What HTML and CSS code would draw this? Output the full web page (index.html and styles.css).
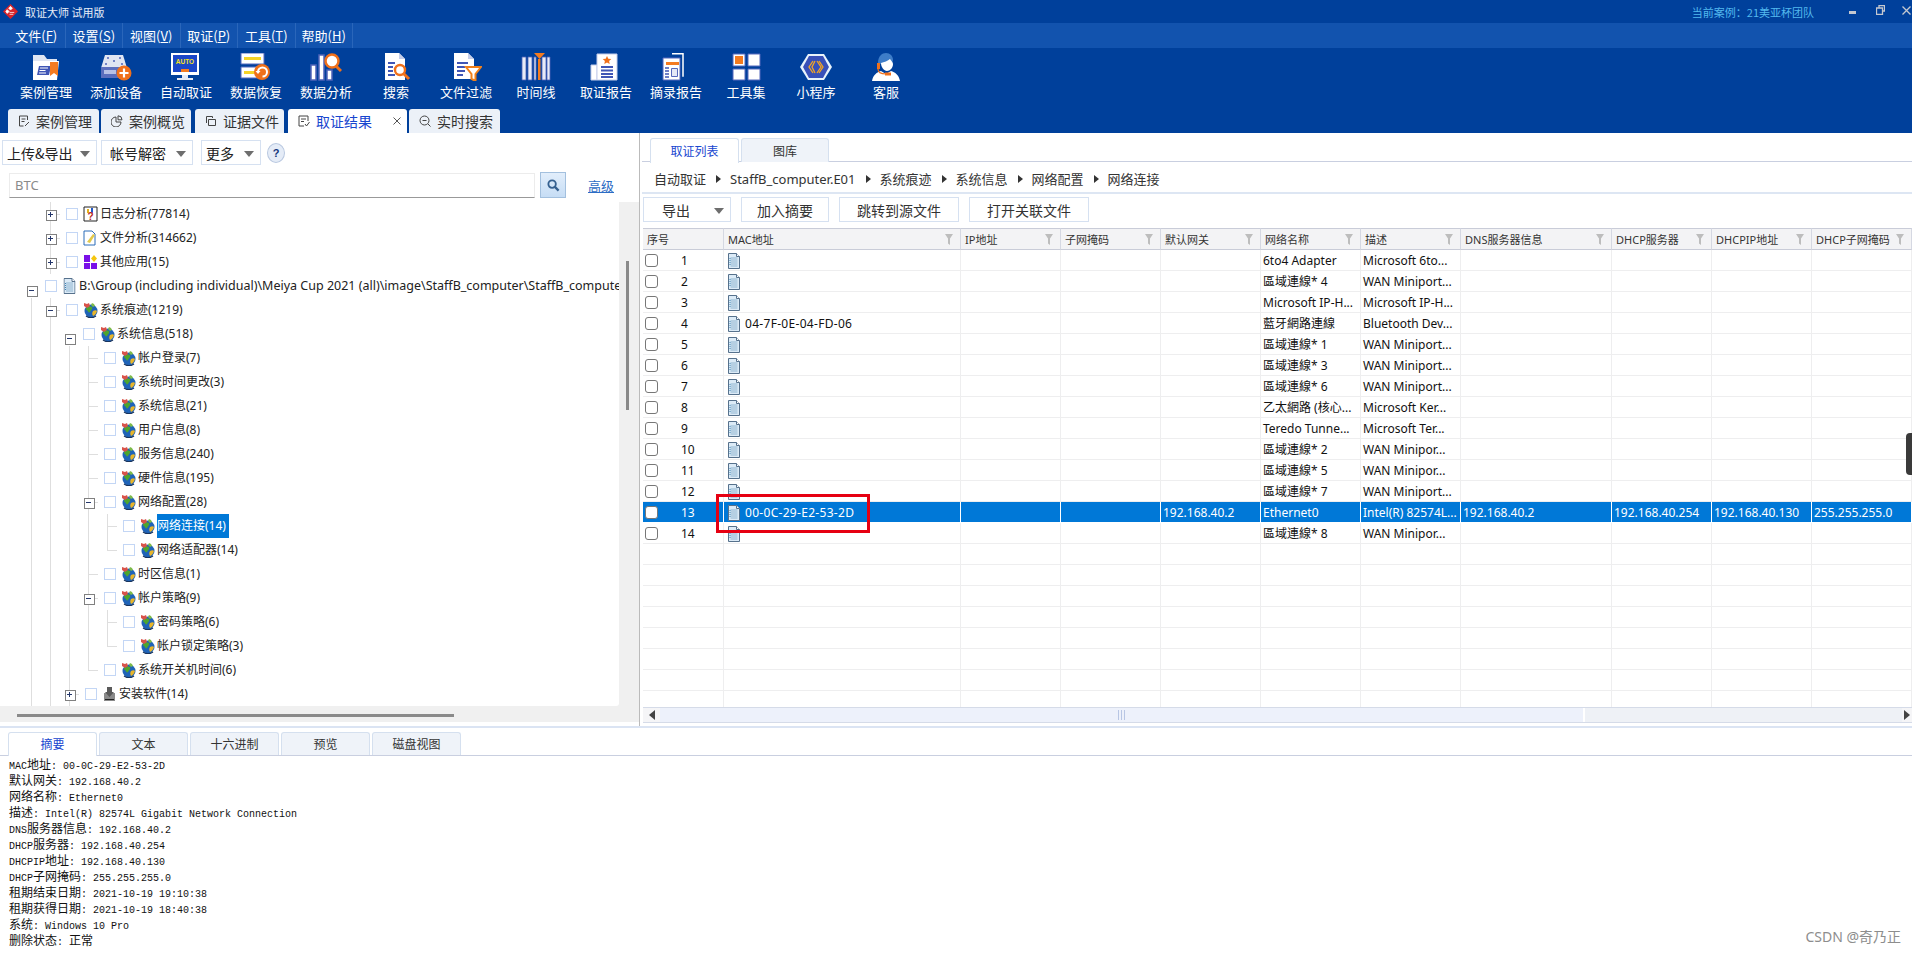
FILE: index.html
```html
<!DOCTYPE html>
<html lang="zh">
<head>
<meta charset="utf-8">
<title>取证大师 试用版</title>
<link rel="stylesheet" href="styles.css">
</head>
<body>
<svg class="defs" width="0" height="0">
  <symbol id="doc" viewBox="0 0 12 16"><path d="M.5.5h8l3 3v12H.5z" fill="#dcebf7" stroke="#56718c"/><path d="M8.500.5v3h3" fill="#fff" stroke="#56718c"/><path d="M2.500 5h7M2.500 7h7M2.500 9h7M2.500 11h7M2.500 13h7" stroke="#8fb4cf"/><path d="M2 5v8" stroke="#3f86b8" stroke-dasharray="1 1"/></symbol>
  <symbol id="globe" viewBox="0 0 15 16"><circle cx="8" cy="9" r="6.500" fill="#1f63b8"/><path d="M3 6c2-2 4-2 6-1 1 2-1 3-2 5-1 1-2 0-2-1-1-1-2-1-2-3z" fill="#4ea52f"/><path d="M10 9c2-1 3-1 4 0-1 3-2 4-4 5-1-2-1-3 0-5z" fill="#e8b52a"/><path d="M1 1l3 1 2-1 1 3-3 2-3-2z" fill="#d9534a"/><path d="M9 1l2 1 1 2-2 1-2-2z" fill="#7dbb4a"/><path d="M3 14c3 2 7 2 10 0" stroke="#17345f" stroke-width="1.400" fill="none"/></symbol>
  <symbol id="funnel" viewBox="0 0 8 11"><path d="M0 0h8L5 4.500V11L3 9.500V4.500z" fill="#bdbdbd"/></symbol>
</svg>

<header class="title-bar">
  <svg class="logo" viewBox="0 0 16 16"><path d="M8 0l8 8-8 8-8-8z" fill="#d8232a"/><path d="M8 2.500l2 2-2 2-2-2zM4.500 6l2 2-2 2-1.500-2zM7 9h5M7 11h4" fill="#fff" stroke="#fff" stroke-width=".8"/></svg>
  <span class="app-name">取证大师 试用版</span>
  <span class="case-name">当前案例：21美亚杯团队</span>
  <div class="win-btns">
    <svg class="w-min" viewBox="0 0 7 3"><path d="M0 0h7v3H0z" fill="#c4c8d0"/></svg>
    <svg class="w-res" viewBox="0 0 9 10"><path d="M3 2.500V.5h5.500v5.500H6.500M.5 3h6v6.500h-6z" fill="none" stroke="#c4c8d0" stroke-width="1.300"/></svg>
    <svg class="w-cls" viewBox="0 0 9 9"><path d="M.5.5l8 8M8.500.5l-8 8" stroke="#c4c8d0" stroke-width="1.300"/></svg>
  </div>
</header>

<nav class="menu-bar">
  <span class="menu-item">文件(<u>F</u>)</span>
  <span class="menu-item">设置(<u>S</u>)</span>
  <span class="menu-item">视图(<u>V</u>)</span>
  <span class="menu-item">取证(<u>P</u>)</span>
  <span class="menu-item">工具(<u>T</u>)</span>
  <span class="menu-item">帮助(<u>H</u>)</span>
</nav>

<section class="ribbon">
  <div class="tools">
    <div class="tool"><svg viewBox="0 0 32 28"><path d="M3 2h11l3 4h10v4H3z" fill="#dfe5f2"/><path d="M3 8h26l-2 19H3z" fill="#fff"/><path d="M9 13h12l-2 9H7z" fill="#3f55b5"/><path d="M10 15h8M9.500 17.500h6M9 20h7" stroke="#fff" stroke-width="1.200"/><path d="M20 9h8v14l-4-3-4 3z" fill="#f47b20"/></svg><span>案例管理</span></div>
    <div class="tool"><svg viewBox="0 0 32 28"><path d="M5 2h18l4 13H1z" fill="#dfe5f2"/><circle cx="8" cy="5" r="1" fill="#4f63b8"/><circle cx="20" cy="5" r="1" fill="#4f63b8"/><circle cx="14" cy="8" r="1" fill="#4f63b8"/><circle cx="6" cy="11" r="1" fill="#4f63b8"/><circle cx="22" cy="11" r="1" fill="#4f63b8"/><path d="M1 14h26v11H1z" fill="#5c6fbd"/><path d="M4 17h12v4H4z" fill="#b7c1e6"/><circle cx="24" cy="20" r="7.500" fill="#f0701a"/><path d="M24 15.500v9M19.500 20h9" stroke="#fff" stroke-width="2.200"/></svg><span>添加设备</span></div>
    <div class="tool"><svg viewBox="0 0 32 28"><path d="M1 0h28v22H1z" fill="#fff"/><path d="M3 2h24v17H3z" fill="#1a47c8"/><text class="auto" x="15" y="11" text-anchor="middle">AUTO</text><path d="M11 16h8v3h-8z" fill="#f47b20"/><path d="M12 22h6v3h-6zM7 25h16v2H7z" fill="#e5e9f4"/></svg><span>自动取证</span></div>
    <div class="tool"><svg viewBox="0 0 32 28"><path d="M1 0h23v11H1zM1 14h23v11H1z" fill="#fff" stroke="#5568bd"/><path d="M4 4h17v3H4zM4 18h11v3H4z" fill="#f5d327"/><circle cx="22" cy="19" r="8" fill="#f0701a"/><path d="M18 19a4.500 4.500 0 1 1 4.500 4.500" fill="none" stroke="#fff" stroke-width="2"/><path d="M15.500 18h5l-2.500 3z" fill="#fff"/></svg><span>数据恢复</span></div>
    <div class="tool"><svg viewBox="0 0 32 28"><path d="M1 12h5v15H1zM9 2h5v25H9zM17 17h5v10h-5z" fill="#fff" stroke="#4f63b8" stroke-width="1.500"/><circle cx="22" cy="8" r="6.500" fill="#fff" stroke="#f0701a" stroke-width="2.500"/><path d="M26 13l5 5" stroke="#f0701a" stroke-width="3"/></svg><span>数据分析</span></div>
    <div class="tool"><svg viewBox="0 0 32 28"><path d="M5 0h14l6 6v21H5z" fill="#fff"/><path d="M19 0v6h6" fill="#c4cdea"/><path d="M8 10h7M8 14h5M8 18h5M8 22h7" stroke="#3f55b5" stroke-width="2"/><circle cx="20" cy="17" r="5" fill="#fff" stroke="#f0701a" stroke-width="2.400"/><path d="M24 21l5 5" stroke="#f0701a" stroke-width="3"/></svg><span>搜索</span></div>
    <div class="tool"><svg viewBox="0 0 32 28"><path d="M4 0h14l6 6v20H4z" fill="#fff"/><path d="M18 0v6h6" fill="#c4cdea"/><path d="M7 10h11M7 14h8M7 18h8M7 22h6" stroke="#3f55b5" stroke-width="2"/><path d="M16 14h15l-5.500 7v7l-4-2v-5z" fill="#fff" stroke="#f0801a" stroke-width="2"/></svg><span>文件过滤</span></div>
    <div class="tool"><svg viewBox="0 0 32 28"><path d="M2 4h4v23H2zM8 4h4v23H8zM14 4h2v23h-2zM22 4h4v23h-4zM27 4h3v23h-3z" fill="#e8ebf6" stroke="#4f63b8" stroke-width=".8"/><path d="M18 6h2.500v21H18z" fill="#f47b20"/><path d="M14 0h11l-5.500 6z" fill="#f47b20"/></svg><span>时间线</span></div>
    <div class="tool"><svg viewBox="0 0 32 28"><path d="M1 12h6v15H1z" fill="#fff" stroke="#c4cdea"/><path d="M7 1h20v26H7z" fill="#fff" stroke="#c4cdea"/><path d="M17 3l1.300 2.700 3 .3-2.200 2 .6 3-2.700-1.500-2.700 1.500.6-3-2.200-2 3-.3z" fill="#f0701a"/><path d="M11 14h12M11 17.500h12M11 21h12M11 24h12" stroke="#3f55b5" stroke-width="1.800"/></svg><span>取证报告</span></div>
    <div class="tool"><svg viewBox="0 0 32 28"><path d="M12 .7h11v23" fill="none" stroke="#fff" stroke-width="1.500"/><path d="M3 5h17v22H3z" fill="#fff" stroke="#5568bd"/><path d="M6 9h13v3H6z" fill="#f47b20"/><path d="M5 15h4M5 18h4M5 21h4M5 24h4" stroke="#3f55b5" stroke-width="1.500"/><path d="M11.500 15.500h6v8h-6z" fill="#e4e8f6" stroke="#5568bd"/></svg><span>摘录报告</span></div>
    <div class="tool"><svg viewBox="0 0 32 28"><path d="M3 1h12v12H3zM18 1h12v12H18zM3 16h12v11H3zM18 16h12v11H18z" fill="#fff" stroke="#5568bd"/><path d="M5 3h8v8H5z" fill="#f47b20"/></svg><span>工具集</span></div>
    <div class="tool"><svg viewBox="0 0 32 28"><path d="M8 1h16l8 13-8 13H8L0 14z" fill="#e8f3fb"/><path d="M9 3h14l6 11-6 11H9L3 14z" fill="#3850b8"/><path d="M13 8l-4 6 4 6M15 8l-3 6 3 6" fill="none" stroke="#f5a623" stroke-width="1.300"/><path d="M17 8l4 6-4 6M19 8l4 6-4 6" fill="none" stroke="#f5a623" stroke-width="1.300"/></svg><span>小程序</span></div>
    <div class="tool"><svg viewBox="0 0 32 28"><path d="M8 10C8 3 12 0 16 0s7 3 7 7l-1 4H10z" fill="#3e7dc8"/><path d="M11 10c3-1 7-2 9-4 1 2 3 3 3 5 0 4-3 7-6 7-3 0-6-4-6-8z" fill="#fff"/><path d="M2 28c1-6 5-9 9-10l5 3 5-3c4 1 8 4 9 10z" fill="#fff"/><path d="M7 10h3v6H7z" fill="#f0701a"/><path d="M8 16c0 3 3 5 8 5" fill="none" stroke="#f0701a" stroke-width="1.200"/><path d="M15 19.500h6v3h-6z" fill="#f0701a"/></svg><span>客服</span></div>
  </div>
  <div class="doc-tabs">
    <div class="doc-tab"><svg viewBox="0 0 12 12"><path d="M9.500 5V1h-8v10h4M3.500 4h4M3.500 6.500h3M7 11l4-4" fill="none" stroke="#444"/></svg><span>案例管理</span></div>
    <div class="doc-tab tab-b"><svg viewBox="0 0 12 12"><path d="M5 2a5 5 0 1 0 5 5H5z M7 .8v4h4a4 4 0 0 0-4-4z" fill="none" stroke="#444"/></svg><span>案例概览</span></div>
    <div class="doc-tab tab-c"><svg viewBox="0 0 12 12"><path d="M1.500 8V1.500h6v1.500M3.500 4.500h7v6h-7z" fill="none" stroke="#444"/></svg><span>证据文件</span></div>
    <div class="doc-tab active"><svg viewBox="0 0 12 12"><path d="M10 6V1H1v10h5M3 4h5M3 6.500h3M7 9l1.500 2L11.500 7" fill="none" stroke="#444"/></svg><span>取证结果</span><svg class="tab-x" viewBox="0 0 8 8"><path d="M.5.5l7 7M7.500.5l-7 7" stroke="#555"/></svg></div>
    <div class="doc-tab"><svg viewBox="0 0 12 12"><circle cx="5.500" cy="5.500" r="4.500" fill="none" stroke="#444"/><path d="M3.500 5.500h4M9 9l2.500 2.500" stroke="#444"/></svg><span>实时搜索</span></div>
  </div>
</section>

<main class="workspace">
  <aside class="left-pane">
    <div class="left-tools">
      <button class="drop b1">上传&amp;导出<i class="caret"></i></button>
      <button class="drop b2">帐号解密<i class="caret"></i></button>
      <button class="drop b3">更多<i class="caret"></i></button>
      <span class="help">?</span>
    </div>
    <div class="search-row">
      <div class="search-box">BTC</div>
      <div class="search-btn"><svg viewBox="0 0 14 14"><circle cx="5.500" cy="5.500" r="4" fill="none" stroke="#35608f" stroke-width="2"/><path d="M8.500 8.500l4 4" stroke="#35608f" stroke-width="2.400"/></svg></div>
      <a class="adv">高级</a>
    </div>
    <div class="tree-wrap">
      <div class="tree">
        <div class="row"><i class="g"></i><i class="x plus v"></i><i class="chk"></i><svg class="ic" viewBox="0 0 15 16"><path d="M1 1h13v14H1z" fill="#fff" stroke="#222"/><path d="M4 3h2v4H4z" fill="#e3b21c"/><path d="M8 2h2v5H8z" fill="#2158c9"/><text class="q" x="7.500" y="14" text-anchor="middle">?</text></svg><span class="t">日志分析(77814)</span></div>
        <div class="row"><i class="g"></i><i class="x plus v"></i><i class="chk"></i><svg class="ic" viewBox="0 0 15 16"><path d="M1 1h8l3 3v11H1z" fill="#fff" stroke="#2b6cb8"/><path d="M4 12l6-8 2 1-5 8z" fill="#e3c94a"/></svg><span class="t">文件分析(314662)</span></div>
        <div class="row"><i class="g"></i><i class="x plus v"></i><i class="chk"></i><svg class="ic" viewBox="0 0 15 16"><path d="M1 1h6v7H1zM1 9h6v6H1zM8 9h6v6H8z" fill="#7a10e8"/><path d="M11 1l3 3.500-3 3.500-3-3.500z" fill="#f5c60f"/></svg><span class="t">其他应用(15)</span></div>
        <div class="row"><i class="x minus d"></i><i class="chk"></i><svg class="ic" viewBox="0 0 12 16"><use href="#doc"/></svg><span class="t long">B:\Group (including individual)\Meiya Cup 2021 (all)\image\StaffB_computer\StaffB_computer</span></div>
        <div class="row"><i class="g l"></i><i class="x minus v"></i><i class="chk"></i><svg class="ic"><use href="#globe"/></svg><span class="t">系统痕迹(1219)</span></div>
        <div class="row"><i class="g l"></i><i class="g l"></i><i class="x minus d"></i><i class="chk"></i><svg class="ic"><use href="#globe"/></svg><span class="t">系统信息(518)</span></div>
        <div class="row"><i class="g l"></i><i class="g l"></i><i class="g l"></i><i class="x tee"></i><i class="chk"></i><svg class="ic"><use href="#globe"/></svg><span class="t">帐户登录(7)</span></div>
        <div class="row"><i class="g l"></i><i class="g l"></i><i class="g l"></i><i class="x tee"></i><i class="chk"></i><svg class="ic"><use href="#globe"/></svg><span class="t">系统时间更改(3)</span></div>
        <div class="row"><i class="g l"></i><i class="g l"></i><i class="g l"></i><i class="x tee"></i><i class="chk"></i><svg class="ic"><use href="#globe"/></svg><span class="t">系统信息(21)</span></div>
        <div class="row"><i class="g l"></i><i class="g l"></i><i class="g l"></i><i class="x tee"></i><i class="chk"></i><svg class="ic"><use href="#globe"/></svg><span class="t">用户信息(8)</span></div>
        <div class="row"><i class="g l"></i><i class="g l"></i><i class="g l"></i><i class="x tee"></i><i class="chk"></i><svg class="ic"><use href="#globe"/></svg><span class="t">服务信息(240)</span></div>
        <div class="row"><i class="g l"></i><i class="g l"></i><i class="g l"></i><i class="x tee"></i><i class="chk"></i><svg class="ic"><use href="#globe"/></svg><span class="t">硬件信息(195)</span></div>
        <div class="row"><i class="g l"></i><i class="g l"></i><i class="g l"></i><i class="x minus v"></i><i class="chk"></i><svg class="ic"><use href="#globe"/></svg><span class="t">网络配置(28)</span></div>
        <div class="row"><i class="g l"></i><i class="g l"></i><i class="g l"></i><i class="g l"></i><i class="x tee"></i><i class="chk"></i><svg class="ic"><use href="#globe"/></svg><span class="t sel">网络连接(14)</span></div>
        <div class="row"><i class="g l"></i><i class="g l"></i><i class="g l"></i><i class="g l"></i><i class="x elbow"></i><i class="chk"></i><svg class="ic"><use href="#globe"/></svg><span class="t">网络适配器(14)</span></div>
        <div class="row"><i class="g l"></i><i class="g l"></i><i class="g l"></i><i class="x tee"></i><i class="chk"></i><svg class="ic"><use href="#globe"/></svg><span class="t">时区信息(1)</span></div>
        <div class="row"><i class="g l"></i><i class="g l"></i><i class="g l"></i><i class="x minus v"></i><i class="chk"></i><svg class="ic"><use href="#globe"/></svg><span class="t">帐户策略(9)</span></div>
        <div class="row"><i class="g l"></i><i class="g l"></i><i class="g l"></i><i class="g l"></i><i class="x tee"></i><i class="chk"></i><svg class="ic"><use href="#globe"/></svg><span class="t">密码策略(6)</span></div>
        <div class="row"><i class="g l"></i><i class="g l"></i><i class="g l"></i><i class="g l"></i><i class="x elbow"></i><i class="chk"></i><svg class="ic"><use href="#globe"/></svg><span class="t">帐户锁定策略(3)</span></div>
        <div class="row"><i class="g l"></i><i class="g l"></i><i class="g l"></i><i class="x elbow"></i><i class="chk"></i><svg class="ic"><use href="#globe"/></svg><span class="t">系统开关机时间(6)</span></div>
        <div class="row"><i class="g l"></i><i class="g l"></i><i class="x plus v"></i><i class="chk"></i><svg class="ic" viewBox="0 0 15 16"><path d="M2 7h11v8H2z" fill="#8a8a8a"/><path d="M5 1h5v5h2l-4.500 5L3 6h2z" fill="#5a5a5a"/><path d="M3 13h9v1H3z" fill="#222"/></svg><span class="t">安装软件(14)</span></div>
      </div>
      <div class="v-scroll"><i class="v-thumb"></i></div>
    </div>
    <div class="h-scroll"><i class="h-thumb"></i></div>
  </aside>

  <section class="right-pane">
    <div class="view-tabs">
      <div class="view-tab active">取证列表</div>
      <div class="view-tab">图库</div>
    </div>
    <div class="crumbs">
      <span>自动取证</span><i class="arrow"></i><span>StaffB_computer.E01</span><i class="arrow"></i><span>系统痕迹</span><i class="arrow"></i><span>系统信息</span><i class="arrow"></i><span>网络配置</span><i class="arrow"></i><span>网络连接</span>
    </div>
    <div class="actions">
      <button class="act a1">导出<i class="caret"></i></button>
      <button class="act a2">加入摘要</button>
      <button class="act a3">跳转到源文件</button>
      <button class="act a4">打开关联文件</button>
    </div>
    <div class="grid-wrap">
      <table class="grid">
        <colgroup><col class="c81"><col class="c237"><col class="c100"><col class="c100"><col class="c100"><col class="c100"><col class="c100"><col class="c151"><col class="c100"><col class="c100"><col class="c100"></colgroup>
        <thead><tr>
          <th>序号</th>
          <th><div>MAC地址<svg><use href="#funnel"/></svg></div></th>
          <th><div>IP地址<svg><use href="#funnel"/></svg></div></th>
          <th><div>子网掩码<svg><use href="#funnel"/></svg></div></th>
          <th><div>默认网关<svg><use href="#funnel"/></svg></div></th>
          <th><div>网络名称<svg><use href="#funnel"/></svg></div></th>
          <th><div>描述<svg><use href="#funnel"/></svg></div></th>
          <th><div>DNS服务器信息<svg><use href="#funnel"/></svg></div></th>
          <th><div>DHCP服务器<svg><use href="#funnel"/></svg></div></th>
          <th><div>DHCPIP地址<svg><use href="#funnel"/></svg></div></th>
          <th><div>DHCP子网掩码<svg><use href="#funnel"/></svg></div></th>
        </tr></thead>
        <tbody>
          <tr><td><i class="cb"></i>1<td class="m"><svg class="d"><use href="#doc"/></svg><td><td><td><td>6to4 Adapter<td>Microsoft 6to...<td><td><td><td>
          <tr><td><i class="cb"></i>2<td class="m"><svg class="d"><use href="#doc"/></svg><td><td><td><td>區域連線* 4<td>WAN Miniport...<td><td><td><td>
          <tr><td><i class="cb"></i>3<td class="m"><svg class="d"><use href="#doc"/></svg><td><td><td><td>Microsoft IP-H...<td>Microsoft IP-H...<td><td><td><td>
          <tr><td><i class="cb"></i>4<td class="m"><svg class="d"><use href="#doc"/></svg>04-7F-0E-04-FD-06<td><td><td><td>藍牙網路連線<td>Bluetooth Dev...<td><td><td><td>
          <tr><td><i class="cb"></i>5<td class="m"><svg class="d"><use href="#doc"/></svg><td><td><td><td>區域連線* 1<td>WAN Miniport...<td><td><td><td>
          <tr><td><i class="cb"></i>6<td class="m"><svg class="d"><use href="#doc"/></svg><td><td><td><td>區域連線* 3<td>WAN Miniport...<td><td><td><td>
          <tr><td><i class="cb"></i>7<td class="m"><svg class="d"><use href="#doc"/></svg><td><td><td><td>區域連線* 6<td>WAN Miniport...<td><td><td><td>
          <tr><td><i class="cb"></i>8<td class="m"><svg class="d"><use href="#doc"/></svg><td><td><td><td>乙太網路 (核心...<td>Microsoft Ker...<td><td><td><td>
          <tr><td><i class="cb"></i>9<td class="m"><svg class="d"><use href="#doc"/></svg><td><td><td><td>Teredo Tunne...<td>Microsoft Ter...<td><td><td><td>
          <tr><td><i class="cb"></i>10<td class="m"><svg class="d"><use href="#doc"/></svg><td><td><td><td>區域連線* 2<td>WAN Minipor...<td><td><td><td>
          <tr><td><i class="cb"></i>11<td class="m"><svg class="d"><use href="#doc"/></svg><td><td><td><td>區域連線* 5<td>WAN Minipor...<td><td><td><td>
          <tr><td><i class="cb"></i>12<td class="m"><svg class="d"><use href="#doc"/></svg><td><td><td><td>區域連線* 7<td>WAN Miniport...<td><td><td><td>
          <tr class="on"><td><i class="cb"></i>13<td class="m"><svg class="d"><use href="#doc"/></svg>00-0C-29-E2-53-2D<td><td><td>192.168.40.2<td>Ethernet0<td>Intel(R) 82574L...<td>192.168.40.2<td>192.168.40.254<td>192.168.40.130<td>255.255.255.0
          <tr><td><i class="cb"></i>14<td class="m"><svg class="d"><use href="#doc"/></svg><td><td><td><td>區域連線* 8<td>WAN Minipor...<td><td><td><td>
          <tr><td><td><td><td><td><td><td><td><td><td><td>
          <tr><td><td><td><td><td><td><td><td><td><td><td>
          <tr><td><td><td><td><td><td><td><td><td><td><td>
          <tr><td><td><td><td><td><td><td><td><td><td><td>
          <tr><td><td><td><td><td><td><td><td><td><td><td>
          <tr><td><td><td><td><td><td><td><td><td><td><td>
          <tr><td><td><td><td><td><td><td><td><td><td><td>
          <tr><td><td><td><td><td><td><td><td><td><td><td>
        </tbody>
      </table>
      <div class="mark"></div>
    </div>
    <div class="grid-scroll">
      <span class="gs-btn"><i class="tri-l"></i></span>
      <span class="gs-thumb"><i></i></span>
      <span class="gs-track"></span>
      <span class="gs-btn end"><i class="tri-r"></i></span>
    </div>
  </section>
</main>

<section class="detail">
  <div class="detail-tabs">
    <div class="d-tab active">摘要</div>
    <div class="d-tab">文本</div>
    <div class="d-tab">十六进制</div>
    <div class="d-tab">预览</div>
    <div class="d-tab">磁盘视图</div>
  </div>
  <div class="summary">
    <p>MAC<b>地址</b>: 00-0C-29-E2-53-2D</p>
    <p><b>默认网关</b>: 192.168.40.2</p>
    <p><b>网络名称</b>: Ethernet0</p>
    <p><b>描述</b>: Intel(R) 82574L Gigabit Network Connection</p>
    <p>DNS<b>服务器信息</b>: 192.168.40.2</p>
    <p>DHCP<b>服务器</b>: 192.168.40.254</p>
    <p>DHCPIP<b>地址</b>: 192.168.40.130</p>
    <p>DHCP<b>子网掩码</b>: 255.255.255.0</p>
    <p><b>租期结束日期</b>: 2021-10-19 19:10:38</p>
    <p><b>租期获得日期</b>: 2021-10-19 18:40:38</p>
    <p><b>系统</b>: Windows 10 Pro</p>
    <p><b>删除状态</b>: <b>正常</b></p>
  </div>
  <div class="handle"></div>
  <div class="watermark">CSDN @奇乃正</div>
</section>
</body>
</html>
```
FILE: styles.css
```css
* { box-sizing: border-box; }
html, body { margin: 0; height: 954px; }
body {
  width: 1912px; overflow: hidden; position: relative; background: #fff; color: #222;
  font-family: "Noto Sans", "Noto Sans CJK SC", sans-serif; font-size: 12px;
  display: flex; flex-direction: column;
}
.defs { position: absolute; }
button { font: inherit; color: inherit; background: #fff; padding: 0; cursor: default; }

/* title bar */
.title-bar { height: 23px; flex: none; background: #00409b; display: flex; align-items: center; color: #e6edf8; font-size: 11px; position: relative; }
.logo { width: 15px; height: 15px; margin-left: 3px; }
.app-name { margin-left: 7px; font-family: "Noto Sans CJK SC", sans-serif; }
.case-name { margin-left: auto; color: #53b9ee; font-family: "Noto Sans CJK SC", sans-serif; margin-right: 35px; }
.win-btns { display: flex; align-items: center; width: 63px; flex: none; }
.w-min { width: 7px; height: 3px; margin-top: 2px; flex: none; }
.w-res { width: 9px; height: 10px; margin: -3px 0 0 20px; flex: none; }
.w-cls { width: 9px; height: 9px; margin: -3px 0 0 17px; flex: none; }

/* menu */
.menu-bar { height: 25px; flex: none; background: #1253ae; display: flex; color: #fff; font-size: 13px; padding-left: 8px; font-family: "Noto Sans CJK SC", sans-serif; }
.menu-item { width: 57.500px; display: flex; align-items: center; justify-content: center; border-right: 1px solid #2a66ba; white-space: pre; }

/* ribbon */
.ribbon { height: 85px; flex: none; background: #00409b; display: flex; flex-direction: column; }
.tools { height: 61px; display: flex; padding: 5px 0 0 11px; }
.tool { width: 70px; display: flex; flex-direction: column; align-items: center; color: #fff; font-size: 13px; font-family: "Noto Sans CJK SC", sans-serif; }
.tool svg { width: 32px; height: 28px; }
.tool span { margin-top: 1px; line-height: 19px; }
.auto { font: bold 6.500px "Liberation Sans", sans-serif; fill: #f5e21a; }
.doc-tabs { display: flex; height: 24px; padding-left: 8px; gap: 2px; }
.doc-tab { width: 91px; background: #ecf1f8; border-radius: 3px 3px 0 0; display: flex; align-items: center; padding-left: 10px; font-size: 14px; color: #333; font-family: "Noto Sans CJK SC", sans-serif; }
.doc-tab svg { width: 12px; height: 12px; margin-right: 6px; flex: none; }
.doc-tab.tab-b { width: 90px; }
.doc-tab.tab-c { width: 89px; margin-left: 2px; }
.doc-tab.active { width: 119px; margin-left: 2px; background: #fff; color: #1746cf; }
.doc-tab .tab-x { width: 8px; height: 8px; margin: 0 0 0 21px; }

/* workspace */
.workspace { height: 593px; flex: none; display: flex; }
.left-pane { width: 640px; flex: none; border-right: 1px solid #bbb; display: flex; flex-direction: column; }
.left-tools { height: 32px; padding: 7px 0 0 2px; display: flex; align-items: flex-start; }
.drop { height: 25px; border: 1px solid #d6e1f1; display: flex; align-items: center; padding-left: 4px; font-size: 14px; position: relative; font-family: "Noto Sans CJK SC", sans-serif; }
.b1 { width: 95px; }
.b2 { width: 92px; margin-left: 4px; padding-left: 8px; }
.b3 { width: 60px; margin-left: 8px; }
.caret { border: 5px solid transparent; border-top: 6px solid #6e6e6e; border-bottom: 0; position: absolute; right: 6px; top: 10px; }
.help { width: 18px; height: 20px; border-radius: 50%; margin: 3px 0 0 6px; background: #e5ecf7; border: 1px solid #b9c8e0; color: #14367c; font: bold 11px/18px "Liberation Sans", sans-serif; text-align: center; }
.search-row { height: 30px; margin-top: 8px; padding-left: 9px; display: flex; align-items: flex-start; }
.search-box { width: 526px; height: 25px; border: 1px solid #ececec; border-bottom: 1px solid #999; padding-left: 5px; color: #8a8a8a; font-size: 13px; line-height: 23px; }
.search-btn { width: 26px; height: 26px; margin: -1px 0 0 5px; background: linear-gradient(#e2eefb, #c6ddf5); border: 1px solid #a3c0de; display: flex; align-items: center; justify-content: center; }
.search-btn svg { width: 13px; height: 13px; }
.adv { margin-left: 22px; color: #2c6cc4; font-size: 13px; text-decoration: underline; line-height: 25px; font-family: "Noto Sans CJK SC", sans-serif; }
.tree-wrap { height: 504px; margin-top: -1px; display: flex; background: #f0f0f0; overflow: hidden; }
.tree { width: 620px; background: #fff; padding-left: 22px; border-radius: 0 0 3px 0; overflow: hidden; }
.row { height: 24px; display: flex; align-items: center; white-space: nowrap; }
.g, .x { width: 19px; height: 24px; flex: none; position: relative; display: block; }
.g.l { background: linear-gradient(#dedede, #dedede) 9px 0 / 1px 100% no-repeat; }
.x.tee { background: linear-gradient(#dedede, #dedede) 9px 0 / 1px 100% no-repeat, linear-gradient(#dedede, #dedede) 9px 12px / 10px 1px no-repeat; }
.x.elbow { background: linear-gradient(#dedede, #dedede) 9px 0 / 1px 13px no-repeat, linear-gradient(#dedede, #dedede) 9px 12px / 10px 1px no-repeat; }
.x.v { background: linear-gradient(#dedede, #dedede) 9px 0 / 1px 100% no-repeat, linear-gradient(#dedede, #dedede) 14px 12px / 5px 1px no-repeat; }
.x.d { background: linear-gradient(#dedede, #dedede) 9px 12px / 1px 12px no-repeat, linear-gradient(#dedede, #dedede) 14px 12px / 5px 1px no-repeat; }
.plus::before, .minus::before { content: ""; position: absolute; left: 5px; top: 8px; width: 9px; height: 9px; background: #fff; border: 1px solid #808080; }
.minus::after { content: ""; position: absolute; left: 7px; top: 12px; width: 5px; height: 1px; background: #23366b; }
.plus::after { content: ""; position: absolute; left: 7px; top: 10px; width: 5px; height: 5px; background: linear-gradient(#23366b, #23366b) 0 2px / 5px 1px no-repeat, linear-gradient(#23366b, #23366b) 2px 0 / 1px 5px no-repeat; }
.chk { width: 12px; height: 12px; margin-left: 6px; border: 1px solid #c3d6f5; background: #fff; flex: none; }
.ic { width: 15px; height: 16px; margin-left: 5px; flex: none; }
.q { font: bold 10px "Liberation Sans", sans-serif; fill: #b5261e; }
.t { margin-left: 2px; line-height: 24px; font-size: 12px; }
.t.long { font-size: 12.500px; }
.t.sel { background: #0078d7; color: #fff; padding-right: 3px; margin-left: 2px; padding-left: 0; }
.v-scroll { width: 20px; position: relative; }
.v-thumb { position: absolute; left: 7px; top: 59px; width: 3px; height: 149px; background: #8a8a8a; }
.h-scroll { height: 16px; background: #f0f0f0; position: relative; flex: none; }
.h-thumb { position: absolute; left: 17px; top: 8px; width: 437px; height: 3px; background: #8a8a8a; }

/* right */
.right-pane { width: 1270px; flex: none; margin-left: 2px; display: flex; flex-direction: column; }
.view-tabs { height: 29px; padding: 5px 0 0 8px; display: flex; gap: 2px; border-bottom: 1px solid #c9cfe0; flex: none; }
.view-tab { width: 88px; height: 24px; background: #eff3f9; border: 1px solid #d5e0ef; border-bottom: 0; border-radius: 3px 3px 0 0; text-align: center; line-height: 23px; font-family: "Noto Sans CJK SC", sans-serif; color: #333; }
.view-tab.active { background: #fff; color: #1746cf; height: 25px; width: 89px; }
.crumbs { height: 32px; flex: none; display: flex; align-items: center; padding: 3px 0 0 12px; font-size: 13px; color: #333; border-bottom: 2px solid #dde6f3; }
.arrow { width: 24px; height: 8px; position: relative; }
.arrow::after { content: ""; position: absolute; left: 10px; top: 0; border: 4px solid transparent; border-left: 5px solid #333; border-right: 0; }
.actions { height: 25px; margin-top: 3px; padding-left: 1px; display: flex; gap: 10px; flex: none; }
.act { height: 25px; border: 1px solid #d6e1f1; font-size: 14px; position: relative; font-family: "Noto Sans CJK SC", sans-serif; color: #333; }
.a1 { width: 88px; padding-right: 22px; }
.a2 { width: 88px; }
.a3 { width: 120px; }
.a4 { width: 120px; }
.grid-wrap { height: 479px; margin-top: 6px; padding-left: 1px; overflow: hidden; position: relative; flex: none; }
.grid { border-collapse: separate; border-spacing: 0; table-layout: fixed; width: 1269px; }
.c81 { width: 81px; } .c237 { width: 237px; } .c100 { width: 100px; } .c151 { width: 151px; }
.grid th { height: 22px; padding: 0 0 0 4px; background: #f3f3f5; border-top: 1px solid #c9ccd8; border-bottom: 1px solid #c9ccd8; border-right: 1px solid #d5d8e2; font-weight: 400; font-size: 11px; text-align: left; color: #333; white-space: nowrap; }
.grid th div { display: flex; justify-content: space-between; align-items: center; padding-right: 7px; }
.grid th svg { width: 8px; height: 11px; flex: none; }
.grid td { height: 21px; padding: 1px 0 0 2px; border-bottom: 1px solid #eeeeef; border-right: 1px solid #eeeeef; white-space: nowrap; overflow: hidden; line-height: 19px; font-size: 12px; color: #111; }
.grid .cb { display: inline-block; width: 13px; height: 13px; border: 1px solid #777; border-radius: 3px; background: #fff; vertical-align: -2px; margin-right: 23px; }
.grid td.m { padding-left: 4px; letter-spacing: .3px; }
.d { width: 12px; height: 16px; margin-right: 5px; vertical-align: -4px; }
.grid tr.on td { background: #0078d7; color: #fff; border-right-color: #fff; border-bottom-color: #fff; }
.mark { position: absolute; left: 74px; top: 266px; width: 154px; height: 39px; border: 3px solid #e60012; }
.grid-scroll { height: 16px; display: flex; margin-left: 1px; border-top: 1px solid #d5dbe8; border-bottom: 1px solid #d5dbe8; flex: none; }
.gs-btn { width: 17px; background: #f5f5f7; display: flex; align-items: center; justify-content: center; }
.gs-btn.end { width: 10px; }
.tri-l { border: 5px solid transparent; border-right: 6px solid #444; border-left: 0; }
.tri-r { border: 5px solid transparent; border-left: 6px solid #444; border-right: 0; }
.gs-thumb { width: 923px; background: #edf1fb; display: flex; align-items: center; justify-content: center; margin-right: 2px; }
.gs-thumb i { width: 7px; height: 10px; border-left: 1px solid #b8c6e4; border-right: 1px solid #b8c6e4; background: linear-gradient(#b8c6e4, #b8c6e4) center / 1px 100% no-repeat; }
.gs-track { flex: 1; background: #eef1f6; }

/* detail */
.detail { flex: 1; border-top: 2px solid #dbe4f3; padding-top: 4px; }
.detail-tabs { height: 24px; padding-left: 8px; display: flex; gap: 2px; border-bottom: 1px solid #c9cfe0; }
.d-tab { width: 89px; height: 23px; background: #eff3f9; border: 1px solid #d5e0ef; border-bottom: 0; border-radius: 3px 3px 0 0; text-align: center; line-height: 22px; font-family: "Noto Sans CJK SC", sans-serif; color: #333; }
.d-tab.active { background: #fff; color: #1746cf; height: 24px; }
.summary { padding: 0 0 0 9px; font: 10px/16px "Liberation Mono", monospace; color: #111; }
.summary p { margin: 0; height: 16px; white-space: pre; }
.summary b { font: 12px/16px "Noto Sans CJK SC", sans-serif; }
.handle { position: absolute; right: 0; top: 433px; width: 6px; height: 42px; background: #3a3a3a; border-radius: 4px 0 0 4px; }
.watermark { position: absolute; right: 11px; top: 928px; color: #8d8d8d; font-size: 14px; line-height: 18px; }
```
